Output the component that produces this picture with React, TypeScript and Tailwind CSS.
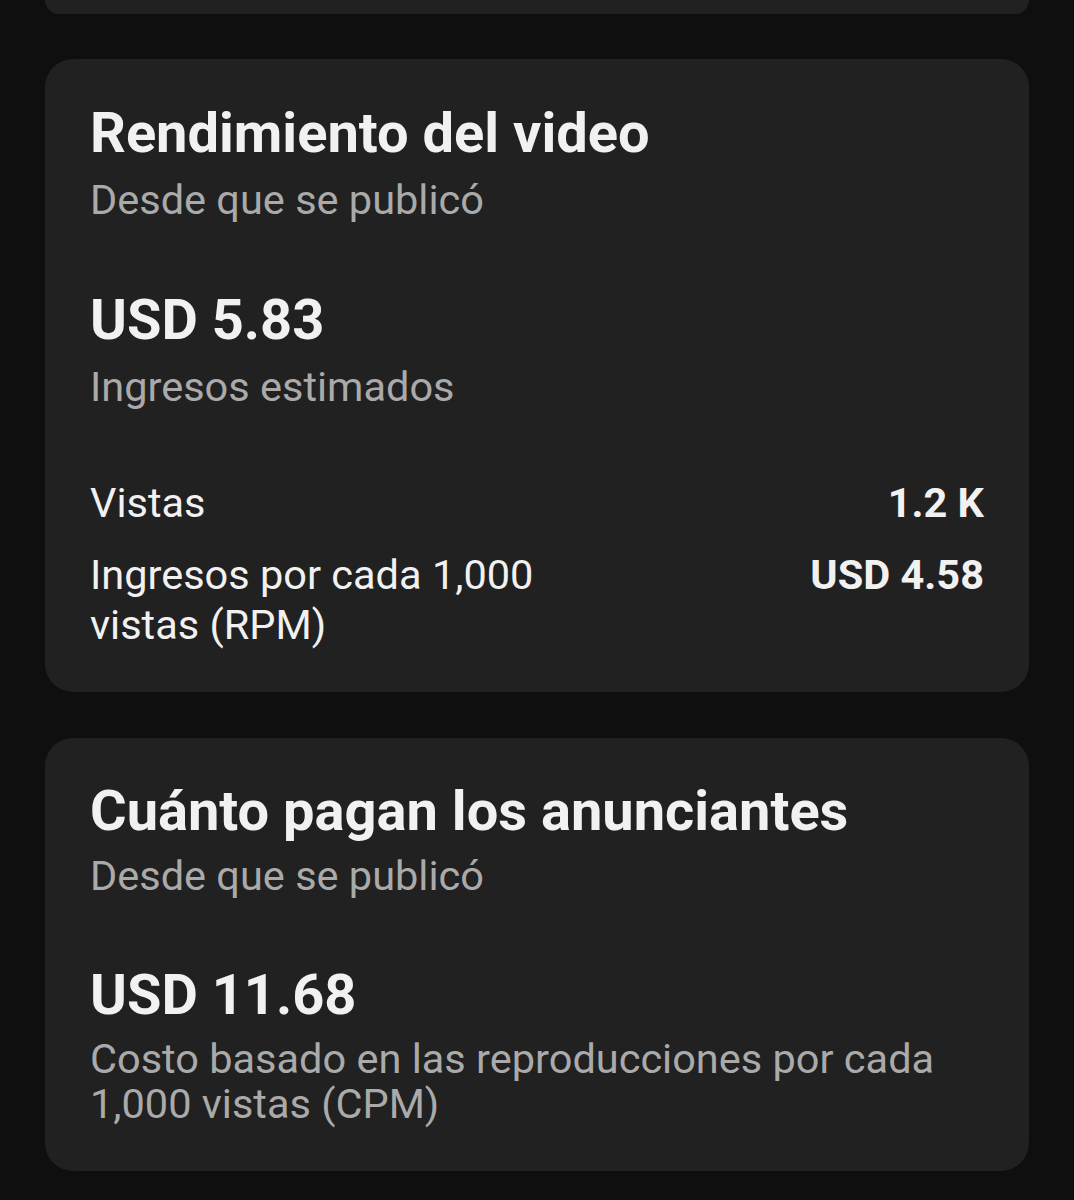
export default function App() {
  return (
    <div
      className="min-h-[1200px] bg-[#0f0f0f] px-[45px] text-[#f1f1f1]"
      style={{ fontFamily: "Roboto, 'Noto Sans', sans-serif" }}
    >
      <div className="h-[14px] rounded-b-[28px] bg-[#212121]" />

      <section className="mt-[45px] rounded-[28px] bg-[#212121] px-[45px] pb-[42px] pt-[42px]">
        <h2 className="text-[56px] font-bold leading-[64px]">Rendimiento del video</h2>
        <p className="mt-[13px] text-[41.5px] leading-[44px] text-[#aaaaaa]">Desde que se publicó</p>

        <p className="mt-[66px] text-[56px] font-bold leading-[64px]">USD 5.83</p>
        <p className="mt-[13px] text-[41.5px] leading-[44px] text-[#aaaaaa]">Ingresos estimados</p>

        <div className="mt-[69px] flex items-start justify-between text-[41.5px] leading-[50px]">
          <span>Vistas</span>
          <span className="font-bold">1.2 K</span>
        </div>
        <div className="mt-[22px] flex items-start justify-between text-[41.5px] leading-[50px]">
          <span className="w-[470px]">Ingresos por cada 1,000 vistas (RPM)</span>
          <span className="font-bold">USD 4.58</span>
        </div>
      </section>

      <section className="mt-[46px] rounded-[28px] bg-[#212121] px-[45px] pb-[45px] pt-[41px]">
        <h2 className="text-[56px] font-bold leading-[64px]">Cuánto pagan los anunciantes</h2>
        <p className="mt-[11px] text-[41.5px] leading-[44px] text-[#aaaaaa]">Desde que se publicó</p>

        <p className="mt-[65px] text-[56px] font-bold leading-[64px]">USD 11.68</p>
        <p className="mt-[9px] text-[41.5px] leading-[45px] text-[#aaaaaa]">
          Costo basado en las reproducciones por cada 1,000 vistas (CPM)
        </p>
      </section>
    </div>
  );
}
